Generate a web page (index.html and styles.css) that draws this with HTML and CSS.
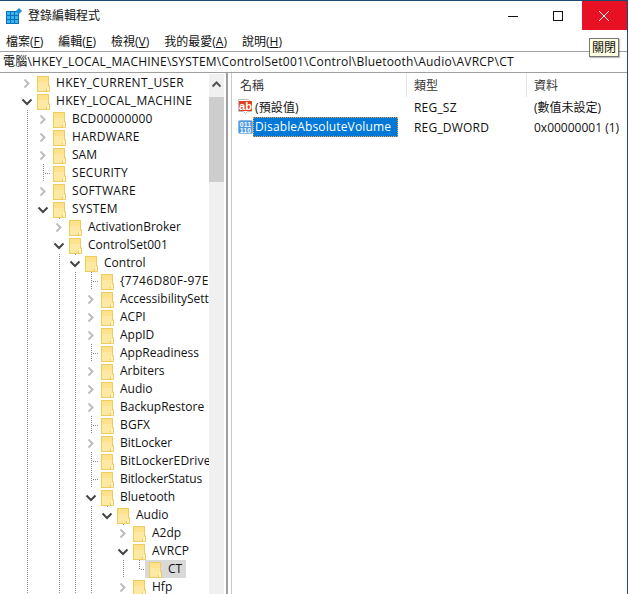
FILE: index.html
```html
<!DOCTYPE html>
<html lang="zh-Hant">
<head>
<meta charset="utf-8">
<title>登錄編輯程式</title>
<link rel="stylesheet" href="styles.css">
</head>
<body>
<svg class="defs" width="0" height="0" aria-hidden="true">
  <symbol id="folder" viewBox="0 0 13 16">
    <rect x="0.5" y="0.5" width="11" height="15" fill="#fde9a2" stroke="#efcb62"/>
    <rect x="1" y="1" width="10" height="5" fill="#fce28a"/>
    <path d="M12.5 9.5v6h-3v-3" fill="#fff4cc" stroke="#efcb62"/>
  </symbol>
  <symbol id="right" viewBox="0 0 16 18"><path d="M5.5 5.5l4 4-4 4" fill="none" stroke="#bdbdbd" stroke-width="2"/></symbol>
  <symbol id="down" viewBox="0 0 16 18"><path d="M3.5 7.5l4.5 4.5 4.5-4.5" fill="none" stroke="#444" stroke-width="2"/></symbol>
</svg>
<div class="window">
  <header class="titlebar">
    <svg class="appicon" width="16" height="16" viewBox="0 0 16 16">
      <rect x="0.5" y="3.5" width="12" height="12" fill="#38b5f0" stroke="#0a6fb5"/>
      <path d="M4.5 4v11M8.5 4v11M1 7.5h11M1 11.5h11" stroke="#0a6fb5"/>
      <path d="M13 0l3 3-3 3-3-3z" fill="#1c8fd6"/>
    </svg>
    <span class="apptitle">登錄編輯程式</span>
    <span class="winbtn"><svg width="10" height="10" viewBox="0 0 10 10"><path d="M0 5.5h10" stroke="#111"/></svg></span>
    <span class="winbtn"><svg width="10" height="10" viewBox="0 0 10 10"><rect x="0.5" y="0.5" width="9" height="9" fill="none" stroke="#111"/></svg></span>
    <span class="winbtn close"><svg width="10" height="10" viewBox="0 0 10 10"><path d="M0 0l10 10M10 0L0 10" stroke="#fff"/></svg></span>
  </header>
  <nav class="menu">
    <span>檔案(<u>F</u>)</span><span>編輯(<u>E</u>)</span><span>檢視(<u>V</u>)</span><span>我的最愛(<u>A</u>)</span><span>說明(<u>H</u>)</span>
  </nav>
  <div class="address">電腦\HKEY_LOCAL_MACHINE\SYSTEM\ControlSet001\Control\Bluetooth\Audio\AVRCP\CT</div>
  <main class="main">
    <div class="tree">
      <div class="row"><span class="cell"><svg><use href="#right"/></svg></span><svg class="folder"><use href="#folder"/></svg><span class="lbl caps">HKEY_CURRENT_USER</span></div>
      <div class="row"><span class="cell"><svg><use href="#down"/></svg></span><svg class="folder"><use href="#folder"/></svg><span class="lbl caps">HKEY_LOCAL_MACHINE</span></div>
      <div class="row"><i class="cell g"></i><span class="cell"><svg><use href="#right"/></svg></span><svg class="folder"><use href="#folder"/></svg><span class="lbl wide">BCD00000000</span></div>
      <div class="row"><i class="cell g"></i><span class="cell"><svg><use href="#right"/></svg></span><svg class="folder"><use href="#folder"/></svg><span class="lbl caps">HARDWARE</span></div>
      <div class="row"><i class="cell g"></i><span class="cell"><svg><use href="#right"/></svg></span><svg class="folder"><use href="#folder"/></svg><span class="lbl">SAM</span></div>
      <div class="row"><i class="cell g"></i><i class="cell g t"></i><svg class="folder"><use href="#folder"/></svg><span class="lbl caps">SECURITY</span></div>
      <div class="row"><i class="cell g"></i><span class="cell"><svg><use href="#right"/></svg></span><svg class="folder"><use href="#folder"/></svg><span class="lbl caps">SOFTWARE</span></div>
      <div class="row"><i class="cell g"></i><span class="cell"><svg><use href="#down"/></svg></span><svg class="folder"><use href="#folder"/></svg><span class="lbl caps">SYSTEM</span></div>
      <div class="row"><i class="cell g"></i><i class="cell"></i><span class="cell stub"><svg><use href="#right"/></svg></span><svg class="folder"><use href="#folder"/></svg><span class="lbl">ActivationBroker</span></div>
      <div class="row"><i class="cell g"></i><i class="cell"></i><span class="cell"><svg><use href="#down"/></svg></span><svg class="folder"><use href="#folder"/></svg><span class="lbl">ControlSet001</span></div>
      <div class="row"><i class="cell g"></i><i class="cell"></i><i class="cell g"></i><span class="cell stub"><svg><use href="#down"/></svg></span><svg class="folder"><use href="#folder"/></svg><span class="lbl">Control</span></div>
      <div class="row"><i class="cell g"></i><i class="cell"></i><i class="cell g"></i><i class="cell g"></i><i class="cell g t"></i><svg class="folder"><use href="#folder"/></svg><span class="lbl caps">{7746D80F-97E0-4E26-9543-26B41FC22F79}</span></div>
      <div class="row"><i class="cell g"></i><i class="cell"></i><i class="cell g"></i><i class="cell g"></i><span class="cell"><svg><use href="#right"/></svg></span><svg class="folder"><use href="#folder"/></svg><span class="lbl">AccessibilitySettings</span></div>
      <div class="row"><i class="cell g"></i><i class="cell"></i><i class="cell g"></i><i class="cell g"></i><span class="cell"><svg><use href="#right"/></svg></span><svg class="folder"><use href="#folder"/></svg><span class="lbl">ACPI</span></div>
      <div class="row"><i class="cell g"></i><i class="cell"></i><i class="cell g"></i><i class="cell g"></i><span class="cell"><svg><use href="#right"/></svg></span><svg class="folder"><use href="#folder"/></svg><span class="lbl">AppID</span></div>
      <div class="row"><i class="cell g"></i><i class="cell"></i><i class="cell g"></i><i class="cell g"></i><i class="cell g t"></i><svg class="folder"><use href="#folder"/></svg><span class="lbl">AppReadiness</span></div>
      <div class="row"><i class="cell g"></i><i class="cell"></i><i class="cell g"></i><i class="cell g"></i><span class="cell"><svg><use href="#right"/></svg></span><svg class="folder"><use href="#folder"/></svg><span class="lbl">Arbiters</span></div>
      <div class="row"><i class="cell g"></i><i class="cell"></i><i class="cell g"></i><i class="cell g"></i><span class="cell"><svg><use href="#right"/></svg></span><svg class="folder"><use href="#folder"/></svg><span class="lbl">Audio</span></div>
      <div class="row"><i class="cell g"></i><i class="cell"></i><i class="cell g"></i><i class="cell g"></i><span class="cell"><svg><use href="#right"/></svg></span><svg class="folder"><use href="#folder"/></svg><span class="lbl">BackupRestore</span></div>
      <div class="row"><i class="cell g"></i><i class="cell"></i><i class="cell g"></i><i class="cell g"></i><i class="cell g t"></i><svg class="folder"><use href="#folder"/></svg><span class="lbl wide">BGFX</span></div>
      <div class="row"><i class="cell g"></i><i class="cell"></i><i class="cell g"></i><i class="cell g"></i><span class="cell"><svg><use href="#right"/></svg></span><svg class="folder"><use href="#folder"/></svg><span class="lbl">BitLocker</span></div>
      <div class="row"><i class="cell g"></i><i class="cell"></i><i class="cell g"></i><i class="cell g"></i><i class="cell g t"></i><svg class="folder"><use href="#folder"/></svg><span class="lbl wide">BitLockerEDriveEncryption</span></div>
      <div class="row"><i class="cell g"></i><i class="cell"></i><i class="cell g"></i><i class="cell g"></i><i class="cell g t"></i><svg class="folder"><use href="#folder"/></svg><span class="lbl tight">BitlockerStatus</span></div>
      <div class="row"><i class="cell g"></i><i class="cell"></i><i class="cell g"></i><i class="cell g"></i><span class="cell"><svg><use href="#down"/></svg></span><svg class="folder"><use href="#folder"/></svg><span class="lbl">Bluetooth</span></div>
      <div class="row"><i class="cell g"></i><i class="cell"></i><i class="cell g"></i><i class="cell g"></i><i class="cell g"></i><span class="cell stub"><svg><use href="#down"/></svg></span><svg class="folder"><use href="#folder"/></svg><span class="lbl">Audio</span></div>
      <div class="row"><i class="cell g"></i><i class="cell"></i><i class="cell g"></i><i class="cell g"></i><i class="cell g"></i><i class="cell"></i><span class="cell stub"><svg><use href="#right"/></svg></span><svg class="folder"><use href="#folder"/></svg><span class="lbl">A2dp</span></div>
      <div class="row"><i class="cell g"></i><i class="cell"></i><i class="cell g"></i><i class="cell g"></i><i class="cell g"></i><i class="cell"></i><span class="cell"><svg><use href="#down"/></svg></span><svg class="folder"><use href="#folder"/></svg><span class="lbl">AVRCP</span></div>
      <div class="row"><i class="cell g"></i><i class="cell"></i><i class="cell g"></i><i class="cell g"></i><i class="cell g"></i><i class="cell"></i><i class="cell g"></i><i class="cell t el"></i><span class="sel"><svg class="folder"><use href="#folder"/></svg><span class="lbl">CT</span></span></div>
      <div class="row"><i class="cell g"></i><i class="cell"></i><i class="cell g"></i><i class="cell g"></i><i class="cell g"></i><i class="cell"></i><span class="cell"><svg><use href="#right"/></svg></span><svg class="folder"><use href="#folder"/></svg><span class="lbl">Hfp</span></div>
    </div>
    <div class="scrollbar">
      <div class="sb-up"><svg width="15" height="23" viewBox="0 0 15 23"><path d="M3.5 12.5l4-4 4 4" fill="none" stroke="#555" stroke-width="2"/></svg></div>
      <div class="sb-thumb"></div>
      <div class="sb-track"></div>
    </div>
    <div class="splitter"></div>
    <div class="list">
      <div class="lh">名稱</div><div class="lh col2">類型</div><div class="lh">資料</div>
      <div class="lc name">
        <svg class="valicon" width="15" height="16" viewBox="0 0 15 16">
          <path d="M0.5 0.5h10l3 3v9h-4l-2 2-2-2h-5z" fill="#fff" stroke="#bdbdbd"/>
          <rect x="1" y="2" width="13" height="10" fill="#e0401f"/>
          <text x="7.5" y="10.5" class="abtext">ab</text>
        </svg>
        <span class="valname">(預設值)</span>
      </div>
      <div class="lc col2">REG_SZ</div>
      <div class="lc">(數值未設定)</div>
      <div class="lc name">
        <svg class="valicon" width="15" height="16" viewBox="0 0 15 16">
          <rect x="0.5" y="1.5" width="14" height="13" rx="1.5" fill="#4f97e0" stroke="#86b9ec"/>
          <text x="7.5" y="7.5" class="bintext">011</text>
          <text x="7.5" y="13.5" class="bintext">110</text>
        </svg>
        <span class="valname selected">DisableAbsoluteVolume</span>
      </div>
      <div class="lc col2">REG_DWORD</div>
      <div class="lc">0x00000001 (1)</div>
    </div>
  </main>
</div>
<div class="tooltip">關閉</div>
</body>
</html>
```
FILE: styles.css
```css
* { box-sizing: border-box; }
html, body { margin: 0; padding: 0; height: 100%; background: #fff; overflow: hidden; }
body {
  font-family: "Open Sans", "Noto Sans CJK TC", sans-serif;
  font-size: 12px;
  color: #111;
}
.defs { position: absolute; }
.window {
  width: 628px;
  height: 594px;
  border-top: 1px solid #1d4a70;
  border-right: 1px solid #1d4a70;
  display: flex;
  flex-direction: column;
  overflow: hidden;
}
.titlebar { height: 29px; display: flex; align-items: center; flex: none; }
.appicon { margin: 1px 0 0 6px; flex: none; }
.apptitle { margin: 0 0 2px 6px; flex: 1; font-size: 12px; font-family: "Noto Sans CJK TC", sans-serif; }
.winbtn { width: 45px; height: 29px; display: flex; align-items: center; padding-left: 16px; }
.winbtn.close { background: #e81123; padding-left: 17px; }
.menu { height: 21px; display: flex; gap: 15px; align-items: center; padding: 0 0 0 6px; flex: none; }
.address {
  height: 22px;
  flex: none;
  border-top: 1px solid #a0a0a0;
  border-bottom: 1px solid #a0a0a0;
  padding: 0 0 0 3px;
  line-height: 19px;
  letter-spacing: .22px;
  white-space: nowrap;
}
.main { flex: 1; display: flex; min-height: 0; padding-top: 1px; }
.tree { width: 209px; flex: none; overflow: hidden; padding-left: 19px; }
.row { height: 18px; display: flex; align-items: center; white-space: nowrap; }
.lbl { margin-bottom: 2px; }
.caps { letter-spacing: .3px; }
.wide { letter-spacing: .15px; }
.tight { letter-spacing: -.12px; }
.cell { display: block; width: 16px; height: 18px; flex: none; }
.cell svg { display: block; width: 16px; height: 18px; }
.g { background: linear-gradient(#8c8c8c 50%, transparent 50%) 8px 0 / 1px 2px repeat-y; }
.t::before { content: ""; display: block; width: 5px; height: 1px; margin: 9px 0 0 10px;
  background: linear-gradient(90deg, #8c8c8c 50%, transparent 50%) 0 0 / 2px 1px repeat-x; }
.el { background: repeating-linear-gradient(#8c8c8c 0 1px, transparent 1px 2px) 8px 0 / 1px 10px no-repeat; }
.stub { background: linear-gradient(#8c8c8c 50%, transparent 50%) 8px 0 / 1px 2px no-repeat; }
.folder { width: 13px; height: 16px; margin: 1px 6px 0 2px; flex: none; }
.sel { display: flex; align-items: center; height: 18px; margin-left: -2px; padding: 0 4px 0 2px; background: #d9d9d9; }
.scrollbar { width: 15px; flex: none; display: flex; flex-direction: column; background: #f0f0f0; }
.sb-up { height: 23px; flex: none; }
.sb-up svg { display: block; }
.sb-thumb { height: 85px; flex: none; background: #cdcdcd; }
.sb-track { flex: 1; }
.splitter { width: 6px; flex: none; margin-left: 2px; border-left: 2px solid #a0a0a0; border-right: 1px solid #c8c8c8; margin-top: -1px; }
.list { flex: 1; display: grid; grid-template-columns: 175px 120px 1fr; grid-template-rows: 23px 20px 20px; align-content: start; }
.lh { display: flex; align-items: center; padding: 0 0 2px 8px; border-right: 1px solid #e5e5e5; color: #333; font-family: "Noto Sans CJK TC", sans-serif; }
.lh:nth-child(3) { border-right: 0; padding-left: 7px; }
.lc { display: flex; align-items: center; padding-left: 7px; white-space: nowrap; }
.lh.col2 { padding-left: 7px; }
.lc.col2 { letter-spacing: .2px; }
.lc.name { padding-left: 6px; }
.valicon { flex: none; }
.valname { padding: 1px 7px 0 2px; height: 20px; line-height: 19px; letter-spacing: .14px; }
.selected { background: #0078d7; color: #fff; outline: 1px dotted #f0a040; outline-offset: -1px; padding-top: 0; }
.abtext { font: bold 11px "Liberation Sans", sans-serif; fill: #fff; text-anchor: middle; }
.bintext { font: bold 7px "Liberation Sans", sans-serif; fill: #fff; text-anchor: middle; }
.tooltip {
  position: absolute;
  left: 589px;
  top: 38px;
  width: 30px;
  height: 19px;
  background: #ffffe1;
  border: 1px solid #767676;
  box-shadow: 1px 1px 1px rgba(0,0,0,.25);
  text-align: center;
  line-height: 16px;
  font-family: "Noto Sans CJK TC", sans-serif;
}
```
